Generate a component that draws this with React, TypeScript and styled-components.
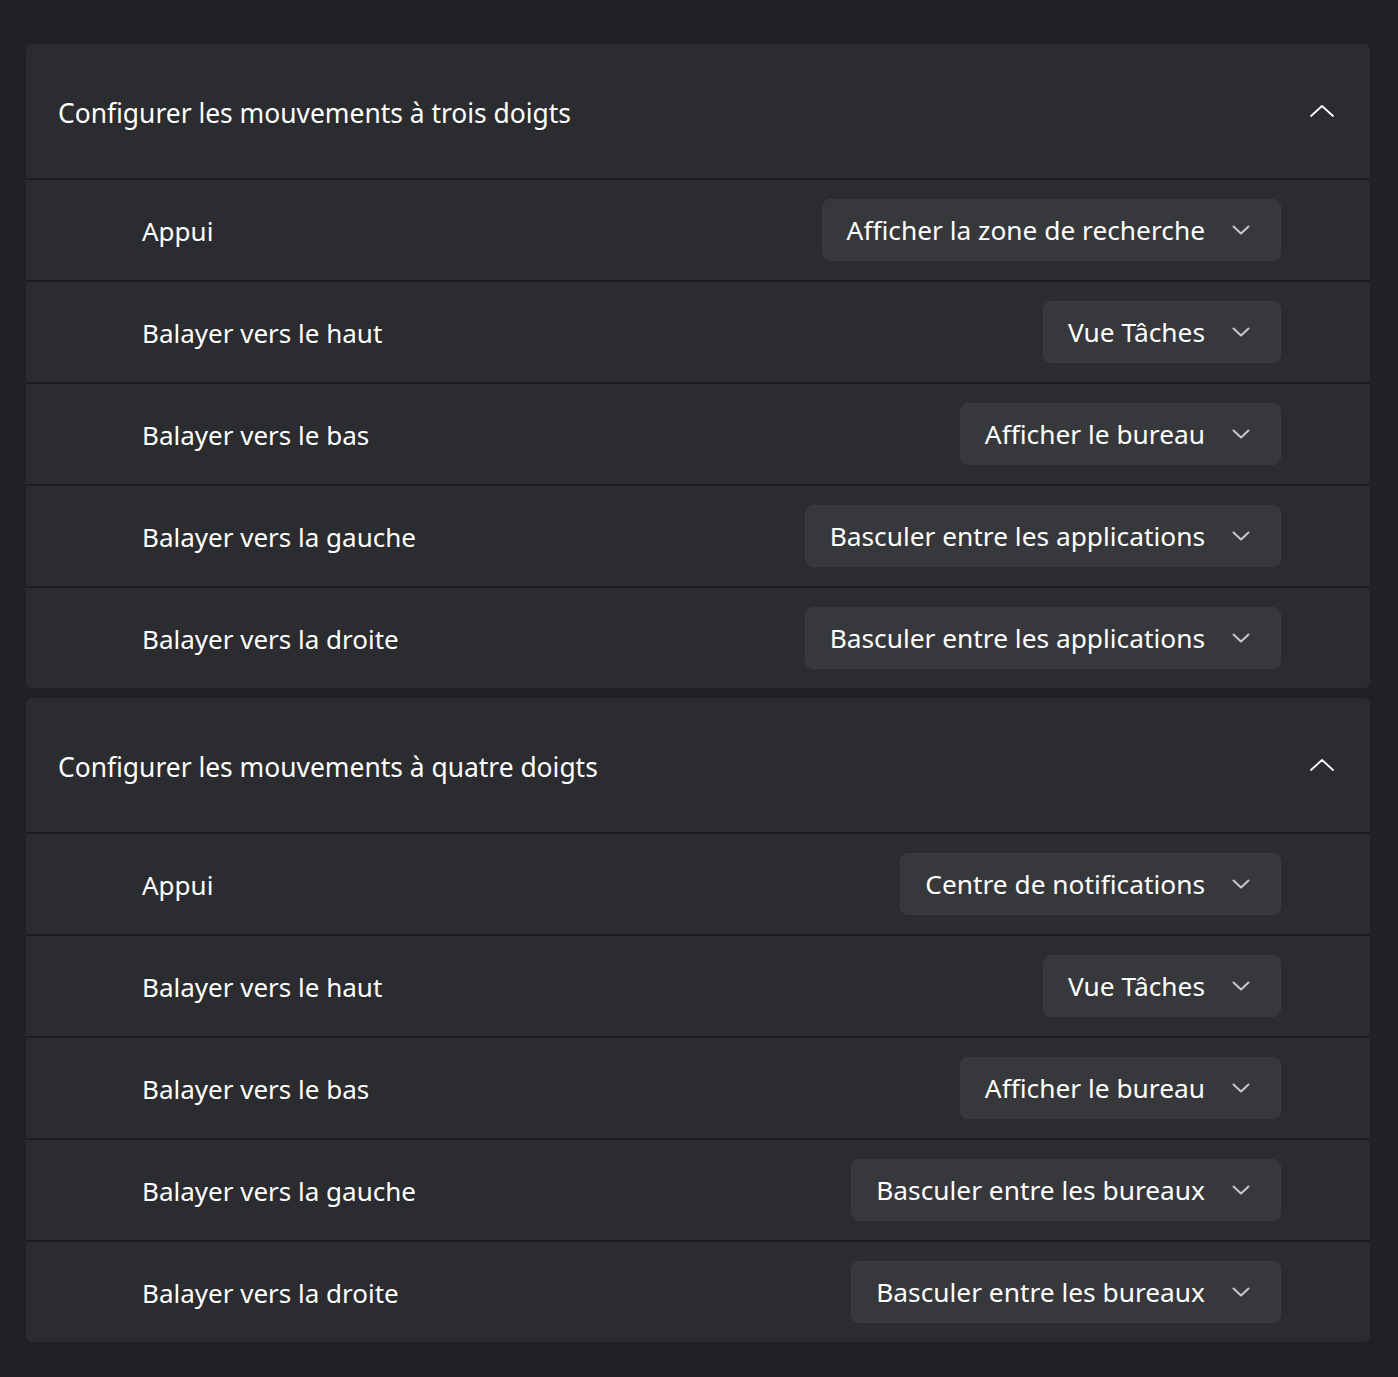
import styled, { createGlobalStyle } from 'styled-components';

const GlobalStyle = createGlobalStyle`
  html, body {
    margin: 0;
    padding: 0;
    background: #202124;
  }
  body {
    font-family: "Noto Sans", "Open Sans", "Liberation Sans", sans-serif;
    color: #ffffff;
  }
`;

interface Gesture {
  label: string;
  value: string;
}

interface Section {
  title: string;
  gestures: Gesture[];
}

const SECTIONS: Section[] = [
  {
    title: 'Configurer les mouvements à trois doigts',
    gestures: [
      { label: 'Appui', value: 'Afficher la zone de recherche' },
      { label: 'Balayer vers le haut', value: 'Vue Tâches' },
      { label: 'Balayer vers le bas', value: 'Afficher le bureau' },
      { label: 'Balayer vers la gauche', value: 'Basculer entre les applications' },
      { label: 'Balayer vers la droite', value: 'Basculer entre les applications' },
    ],
  },
  {
    title: 'Configurer les mouvements à quatre doigts',
    gestures: [
      { label: 'Appui', value: 'Centre de notifications' },
      { label: 'Balayer vers le haut', value: 'Vue Tâches' },
      { label: 'Balayer vers le bas', value: 'Afficher le bureau' },
      { label: 'Balayer vers la gauche', value: 'Basculer entre les bureaux' },
      { label: 'Balayer vers la droite', value: 'Basculer entre les bureaux' },
    ],
  },
];

const Page = styled.div`
  display: flex;
  flex-direction: column;
  gap: 10px;
  padding: 44px 28px 36px 26px;
`;

const Card = styled.section`
  display: flex;
  flex-direction: column;
  gap: 2px;
  background: #1d1e21;
  border-radius: 6px;
  overflow: hidden;
`;

const Header = styled.header`
  display: flex;
  align-items: center;
  justify-content: space-between;
  height: 134px;
  padding: 0 36px 0 32px;
  background: #2b2c2f;
`;

const Title = styled.h2`
  margin: 0;
  padding-top: 4px;
  font-size: 26.4px;
  font-weight: 400;
`;

const Row = styled.div`
  display: flex;
  align-items: center;
  justify-content: space-between;
  height: 100px;
  padding: 0 89px 0 116px;
  background: #2b2c2f;
`;

const Label = styled.span`
  font-size: 26px;
  padding-top: 2px;
`;

const Dropdown = styled.button`
  display: flex;
  align-items: center;
  gap: 27px;
  height: 62px;
  margin-top: -1px;
  padding: 0 30px 0 24px;
  border: 1px solid #3a3b3e;
  border-radius: 8px;
  background: #37383b;
  color: #ffffff;
  font-family: inherit;
  font-size: 26.3px;
  cursor: pointer;
`;

const DropChevron = styled.span`
  display: flex;
  align-items: center;
  padding-top: 1px;
`;

const UpChevron = () => (
  <svg width="24" height="12" viewBox="0 0 24 12" fill="none">
    <path d="M1 11 L12 1 L23 11" stroke="#ffffff" strokeWidth="1.8" strokeLinecap="round" strokeLinejoin="round" />
  </svg>
);

const DownChevron = () => (
  <svg width="18" height="10" viewBox="0 0 18 10" fill="none">
    <path d="M1.5 1.5 L9 8.5 L16.5 1.5" stroke="#c9c9cb" strokeWidth="2" strokeLinecap="round" strokeLinejoin="round" />
  </svg>
);

function GestureSection({ section }: { section: Section }) {
  return (
    <Card>
      <Header>
        <Title>{section.title}</Title>
        <UpChevron />
      </Header>
      {section.gestures.map((g, i) => (
        <Row key={i}>
          <Label>{g.label}</Label>
          <Dropdown>
            {g.value}
            <DropChevron>
              <DownChevron />
            </DropChevron>
          </Dropdown>
        </Row>
      ))}
    </Card>
  );
}

export default function App() {
  return (
    <>
      <GlobalStyle />
      <Page>
        {SECTIONS.map((s) => (
          <GestureSection key={s.title} section={s} />
        ))}
      </Page>
    </>
  );
}
